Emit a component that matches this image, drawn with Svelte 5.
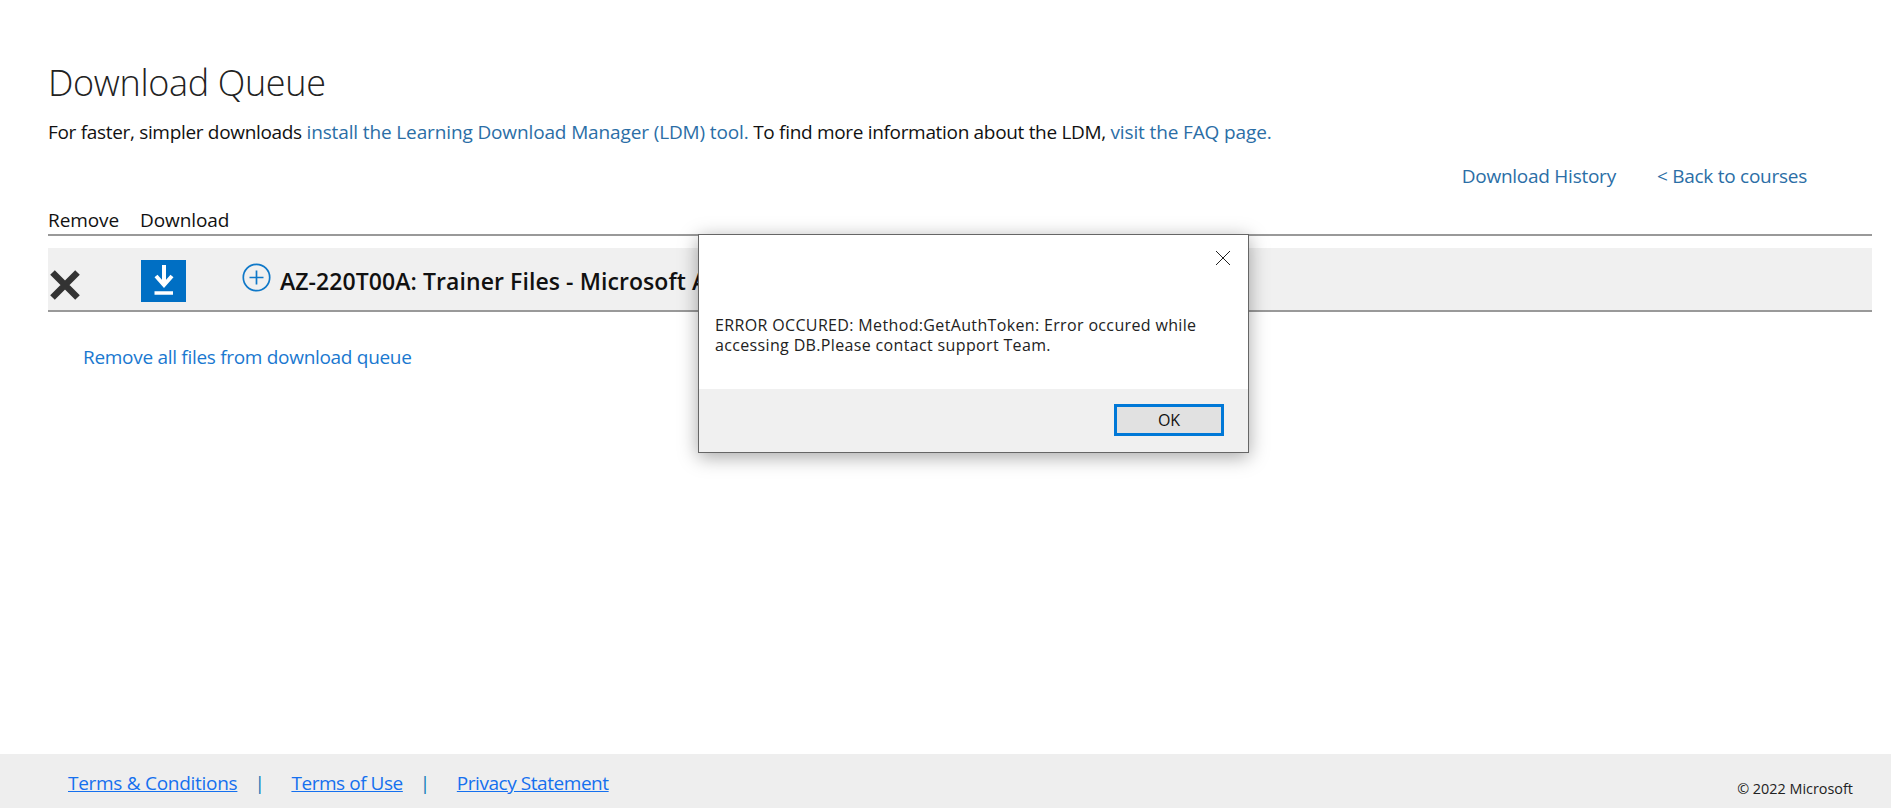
<script>
  const links = ["Terms & Conditions", "Terms of Use", "Privacy Statement"];
</script>

<div class="page">
  <main class="main">
    <h1 class="title">Download Queue</h1>
    <p class="intro">For faster, simpler downloads <a href="#a">install the Learning Download Manager (LDM) tool.</a> To find more information about the LDM, <a href="#b">visit the FAQ page.</a></p>
    <nav class="actions">
      <a href="#h">Download History</a>
      <a href="#c">&lt; Back to courses</a>
    </nav>
    <div class="head">
      <span class="col-remove">Remove</span>
      <span>Download</span>
    </div>
    <div class="row">
      <button class="remove" aria-label="Remove">
        <svg width="30" height="30" viewBox="0 0 30 30"><path d="M2.5 2.5 L27.5 27.5 M27.5 2.5 L2.5 27.5" stroke="#333" stroke-width="6.5" fill="none"/></svg>
      </button>
      <button class="download" aria-label="Download">
        <svg width="45" height="42" viewBox="0 0 45 42" fill="none" stroke="#fff"><path d="M23 5 V24" stroke-width="4"/><path d="M15 16 L23 25 L31 16" stroke-width="4"/><path d="M13.5 33 H32" stroke-width="3.5"/></svg>
      </button>
      <svg class="plus" width="29" height="29" viewBox="0 0 29 29" fill="none" stroke="#0f78c8" stroke-width="1.7"><circle cx="14.5" cy="14.5" r="13.2"/><path d="M14.5 7.5 V21.5 M7.5 14.5 H21.5"/></svg>
      <span class="name">AZ-220T00A: Trainer Files - Microsoft Azure IoT Developer</span>
    </div>
    <a class="remove-all" href="#r">Remove all files from download queue</a>
  </main>

  <footer class="footer">
    <div class="links">
      {#each links as l, i}
        {#if i > 0}<span class="pipe">|</span>{/if}
        <a href="#t">{l}</a>
      {/each}
    </div>
    <span class="copy">© 2022 Microsoft</span>
  </footer>

  <div class="dialog" role="dialog">
    <div class="dialog-body">
      <svg class="close" width="16" height="16" viewBox="0 0 16 16"><path d="M1 1 L15 15 M15 1 L1 15" stroke="#222" stroke-width="1" fill="none"/></svg>
      <p>ERROR OCCURED: Method:GetAuthToken: Error occured while accessing DB.Please contact support Team.</p>
    </div>
    <div class="dialog-foot"><button class="ok">OK</button></div>
  </div>
</div>

<style>
  :global(body) { margin: 0; background: #fff; font-family: "Open Sans", "Noto Sans", sans-serif; }
  .page { height: 808px; display: flex; flex-direction: column; position: relative; overflow: hidden; }
  .main { flex: 1; padding: 0 19px 0 48px; }
  a { color: #2b6ea6; text-decoration: none; }
  .title { margin: 59px 0 0; font-size: 36px; line-height: 48px; font-weight: 300; color: #222; letter-spacing: -0.35px; }
  .intro { margin: 13px 0 0; font-size: 19px; line-height: 24px; color: #111; letter-spacing: -0.32px; white-space: nowrap; }
  .intro a { letter-spacing: -0.13px; }
  .actions { display: flex; justify-content: flex-end; gap: 41px; margin: 20px 65px 0 0; font-size: 19px; line-height: 24px; letter-spacing: -0.26px; }
  .head { display: flex; margin-top: 20px; padding-bottom: 2px; height: 24px; font-size: 19px; line-height: 24px; font-weight: 500; color: #111; letter-spacing: -0.1px; border-bottom: 2px solid #999; }
  .col-remove { width: 92px; }
  .row { margin-top: 12px; height: 62px; background: #f0f0f0; border-bottom: 2px solid #999; display: flex; align-items: flex-start; position: relative; }
  .row button { border: 0; padding: 0; background: none; display: block; }
  .remove { margin: 22px 0 0 2px; width: 30px; height: 30px; }
  .download { margin: 12px 0 0 61px; width: 45px; height: 42px; background: #006fc4 !important; }
  .plus { margin: 15px 0 0 56px; }
  .name { margin: 18px 0 0 9px; font-size: 23px; line-height: 30px; font-weight: 600; color: #111; letter-spacing: 0.08px; white-space: nowrap; }
  .remove-all { display: block; margin: 33px 0 0 35px; font-size: 19px; line-height: 24px; color: #1a78d0; letter-spacing: -0.3px; }
  .footer { height: 54px; background: #eee; display: flex; justify-content: space-between; padding: 0 38px 0 68px; }
  .links { display: flex; margin-top: 16px; font-size: 19px; line-height: 26px; letter-spacing: -0.45px; }
  .links a { color: #1570ef; text-decoration: underline; }
  .links a:first-child { letter-spacing: -0.28px; }
  .pipe { color: #0f78b8; margin: 0 27px 0 17px; }
  .copy { margin-top: 25px; font-size: 14.4px; line-height: 20px; color: #222; }
  .dialog { position: absolute; left: 698px; top: 234px; width: 551px; height: 219px; box-sizing: border-box; border: 1px solid #666; background: #fff; display: flex; flex-direction: column; box-shadow: 0 4px 18px rgba(0,0,0,.35); }
  .dialog-body { flex: 1; position: relative; }
  .close { position: absolute; right: 17px; top: 15px; }
  .dialog-body p { margin: 80px 30px 0 16px; font-size: 16px; line-height: 20px; color: #222; letter-spacing: 0.35px; }
  .dialog-foot { height: 63px; background: #f0f0f0; box-sizing: border-box; padding: 15px 24px 0 0; display: flex; justify-content: flex-end; align-items: flex-start; }
  .ok { width: 110px; height: 32px; box-sizing: border-box; border: 3px solid #0078d7; background: #e1e1e1; font: 500 16px "Open Sans", sans-serif; color: #111; padding: 0; }
</style>
